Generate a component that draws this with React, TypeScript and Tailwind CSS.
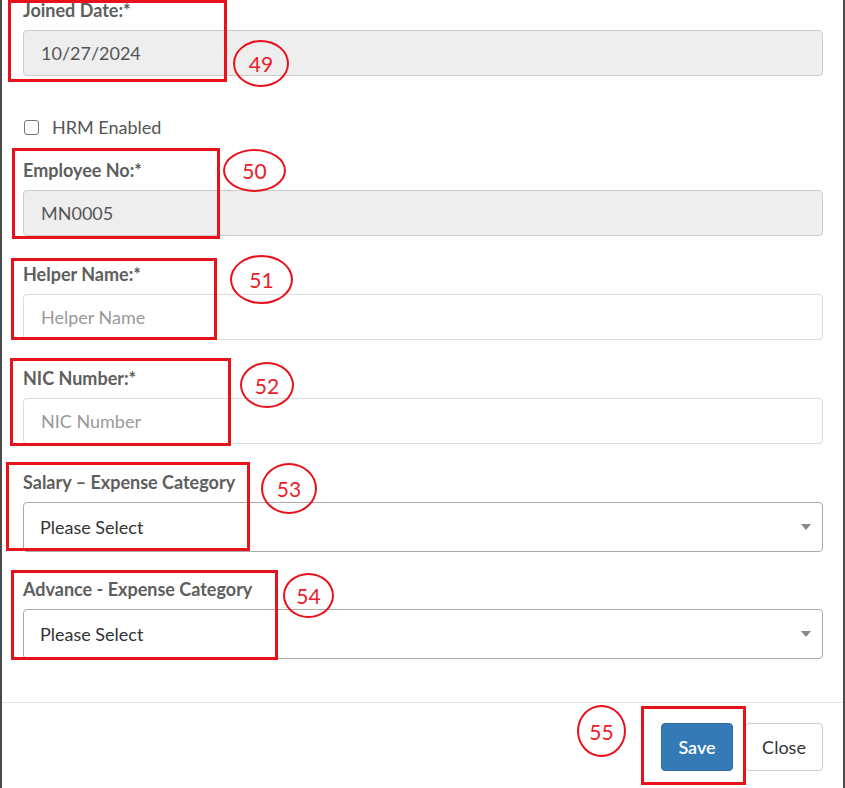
import React from "react";

const font = { fontFamily: "Lato, 'Noto Sans', sans-serif" };

function Label({ children }: { children: React.ReactNode }) {
  return (
    <div className="h-[20px] leading-[20px] mb-[10px] text-[18px] font-bold text-[#5e5e5e] whitespace-nowrap">
      {children}
    </div>
  );
}

function ReadOnly({ value }: { value: string }) {
  return (
    <div className="h-[46px] rounded-[4px] border border-[#cccccc] bg-[#eeeeee] pl-[17px] flex items-center text-[18px] text-[#555555]">
      {value}
    </div>
  );
}

function TextInput({ placeholder }: { placeholder: string }) {
  return (
    <div className="h-[46px] rounded-[4px] border border-[#dddddd] bg-white pl-[17px] flex items-center text-[18px] text-[#999999]">
      {placeholder}
    </div>
  );
}

function SelectBox() {
  return (
    <div className="h-[50px] rounded-[4px] border border-[#aaaaaa] bg-white pl-[16px] pr-[11px] flex items-center justify-between text-[18px] text-[#333333]">
      <span>Please Select</span>
      <span className="w-0 h-0 border-l-[5px] border-r-[5px] border-t-[6px] border-l-transparent border-r-transparent border-t-[#888888]" />
    </div>
  );
}

// red annotation overlays drawn on top of the screenshot
function Box({ l, t, w, h }: { l: number; t: number; w: number; h: number }) {
  return (
    <div
      className="absolute border-[3px] border-[#e8121c] pointer-events-none"
      style={{ left: l, top: t, width: w, height: h }}
    />
  );
}

function Badge({ l, t, w, h, n }: { l: number; t: number; w: number; h: number; n: string }) {
  return (
    <div
      className="absolute rounded-[50%] border-[2.5px] border-[#e8121c] flex items-center justify-center text-[21px] text-[#e8202a] leading-none pointer-events-none"
      style={{ left: l, top: t, width: w, height: h }}
    >
      {n}
    </div>
  );
}

export default function App() {
  return (
    <div className="relative w-[845px] h-[788px] overflow-hidden bg-white" style={font}>
      <div className="h-full border-l-2 border-r-2 border-[#4a4a4a] flex flex-col">
        <div className="pl-[21px] pr-[20px]">
          <Label>Joined Date:*</Label>
          <ReadOnly value="10/27/2024" />

          <div className="mt-[41px] h-[20px] flex items-center">
            <span className="ml-[1px] w-[15px] h-[15px] rounded-[3px] border border-[#767676] bg-white" />
            <span className="ml-[13px] text-[18px] text-[#555555]">HRM Enabled</span>
          </div>

          <div className="mt-[23px]">
            <Label>Employee No:*</Label>
            <ReadOnly value="MN0005" />
          </div>

          <div className="mt-[28px]">
            <Label>Helper Name:*</Label>
            <TextInput placeholder="Helper Name" />
          </div>

          <div className="mt-[28px]">
            <Label>NIC Number:*</Label>
            <TextInput placeholder="NIC Number" />
          </div>

          <div className="mt-[28px]">
            <Label>Salary – Expense Category</Label>
            <SelectBox />
          </div>

          <div className="mt-[27px]">
            <Label>Advance - Expense Category</Label>
            <SelectBox />
          </div>
        </div>

        <div className="mt-[43px] border-t border-[#e5e5e5] pt-[20px] pr-[20px] flex justify-end gap-[12px]">
          <button className="h-[48px] w-[72px] rounded-[4px] bg-[#337ab7] border border-[#2e6da4] text-white text-[18px] font-semibold">
            Save
          </button>
          <button className="h-[48px] w-[78px] rounded-[4px] bg-white border border-[#cccccc] text-[#333333] text-[18px]">
            Close
          </button>
        </div>
      </div>

      <Box l={8} t={0} w={219} h={82} />
      <Box l={12} t={148} w={208} h={91} />
      <Box l={11} t={258} w={206} h={82} />
      <Box l={10} t={358} w={221} h={88} />
      <Box l={6} t={462} w={244} h={89} />
      <Box l={11} t={570} w={267} h={90} />
      <Box l={641} t={706} w={105} h={79} />

      <Badge l={233} t={40} w={56} h={47} n="49" />
      <Badge l={223} t={149} w={63} h={43} n="50" />
      <Badge l={230} t={255} w={63} h={49} n="51" />
      <Badge l={240} t={362} w={54} h={46} n="52" />
      <Badge l={261} t={463} w={56} h={51} n="53" />
      <Badge l={283} t={573} w={51} h={45} n="54" />
      <Badge l={577} t={705} w={49} h={52} n="55" />
    </div>
  );
}
